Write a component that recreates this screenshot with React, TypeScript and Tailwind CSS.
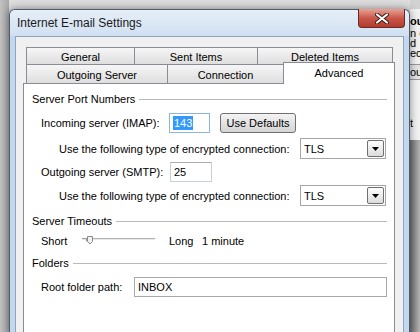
import React from 'react'

const ui = "font-['Liberation_Sans',Arial,sans-serif] text-[11px] leading-[14px] text-black"

function Tab({ label, cls, selected }: { label: string; cls: string; selected?: boolean }) {
  if (selected) {
    return (
      <div className={`relative z-10 -mb-px flex h-[22px] justify-center border border-b-0 border-[#898c95] bg-white pt-[3px] ${cls}`}>
        {label}
      </div>
    )
  }
  return (
    <div className={`flex justify-center border-t border-l border-[#898c95] bg-linear-to-b from-[#f6f6f6] to-[#dedede] ${cls}`}>
      {label}
    </div>
  )
}

function Heading({ label }: { label: string }) {
  return (
    <div className="flex h-[16px] items-center">
      <span>{label}</span>
      <div className="ml-[4px] h-px flex-1 bg-[#b9b9b9]" />
    </div>
  )
}

function Select({ value }: { value: string }) {
  return (
    <div className="flex h-[21px] w-[86px] items-center border border-[#a5a5a5] bg-white">
      <span className="pl-[3px]">{value}</span>
      <div className="mr-px ml-auto flex h-[17px] w-[17px] items-center justify-center rounded-[2px] border border-[#707070] bg-linear-to-b from-[#fdfdfd] to-[#dcdcdc]">
        <svg width="7" height="4" viewBox="0 0 7 4">
          <path d="M0 0h7L3.5 4z" fill="#000" />
        </svg>
      </div>
    </div>
  )
}

function CloseButton() {
  return (
    <div className="-mt-px mr-[4px] flex h-[19px] w-[47px] items-center justify-center rounded-b-[4px] border border-t-0 border-[#6a2a22] bg-linear-to-b from-[#e6a396] via-[#c9574a] to-[#b33b2c]">
      <svg width="14" height="11" viewBox="0 0 14 11">
        <path d="M2 1.5l10 8M12 1.5l-10 8" stroke="#3b1a16" strokeWidth="4" strokeLinecap="round" />
        <path d="M2 1.5l10 8M12 1.5l-10 8" stroke="#fff" strokeWidth="2.2" strokeLinecap="round" />
      </svg>
    </div>
  )
}

function Slider() {
  return (
    <svg width="74" height="16" viewBox="0 0 74 16">
      <rect x="0" y="5" width="73" height="1" fill="#b4b4b4" />
      <rect x="0" y="6" width="73" height="1" fill="#e8e8e8" />
      <path d="M0.5 5.5h4v3" stroke="#9a9a9a" fill="none" />
      <path d="M5.5 3.5h5v5l-2.5 2.5l-2.5-2.5z" fill="#f2f2f2" stroke="#8b8b8b" />
    </svg>
  )
}

export default function App() {
  return (
    <div className={`flex h-[332px] w-[420px] overflow-hidden bg-[#d6d6d6] ${ui}`}>
      {/* desktop left */}
      <div className="w-[9px] bg-linear-to-r from-[#c2c2c2] to-[#a8a8a8]" />

      <div className="flex w-[401px] flex-col">
        <div className="h-[9px] shrink-0 bg-[#dedede]" />
        {/* window */}
        <div className="relative z-10 flex flex-1 flex-col rounded-t-[6px] border border-b-0 border-[#4d5d6e] bg-[#c2d8ef] shadow-[0_0_8px_rgba(0,0,0,0.45)]">
          <div className="flex h-[26px] shrink-0 items-start justify-between rounded-t-[5px] bg-linear-to-b from-[#e7eff8] to-[#d0e0f1]">
            <span className="mt-[6px] ml-[7px] text-[12px] leading-[14px] text-[#1a1a1a]">Internet E-mail Settings</span>
            <CloseButton />
          </div>

          {/* client area */}
          <div className="mx-[5px] flex-1 border border-[#8fa3ba] bg-[#f0f0f0] pt-[10px] pr-[8px] pl-[7px]">
            <div className="ml-[3px] flex h-[17px]">
              <Tab label="General" cls="h-[17px] w-[108px] pt-[2px]" />
              <Tab label="Sent Items" cls="h-[17px] w-[123px] pt-[2px]" />
              <Tab label="Deleted Items" cls="h-[17px] w-[136px] border-r pt-[2px]" />
            </div>
            <div className="ml-[3px] flex h-[19px] items-end">
              <Tab label="Outgoing Server" cls="h-[19px] w-[141px] pt-[3px]" />
              <Tab label="Connection" cls="h-[19px] w-[116px] pt-[3px]" />
              <Tab label="Advanced" cls="w-[112px]" selected />
            </div>

            {/* panel */}
            <div className="flex h-[250px] flex-col border border-[#898c95] bg-white pr-[7px] pl-[8px]">
              <div className="mt-[7px]">
                <Heading label="Server Port Numbers" />
              </div>
              <div className="mt-[6px] flex h-[20px] items-center pl-[9px]">
                <span className="w-[128px]">Incoming server (IMAP):</span>
                <div className="flex h-[20px] w-[41px] items-center border border-[#8cb4dc] bg-white pl-[3px]">
                  <span className="bg-[#3399ff] px-px text-white">143</span>
                </div>
                <div className="ml-[10px] flex h-[20px] w-[76px] items-center justify-center rounded-[3px] border border-[#707070] bg-linear-to-b from-[#f4f4f4] to-[#d4d4d4]">
                  Use Defaults
                </div>
              </div>
              <div className="mt-[5px] flex h-[21px] items-center pl-[27px]">
                <span className="w-[241px]">Use the following type of encrypted connection:</span>
                <Select value="TLS" />
              </div>
              <div className="mt-[3px] flex h-[20px] items-center pl-[9px]">
                <span className="w-[129px]">Outgoing server (SMTP):</span>
                <div className="flex h-[20px] w-[42px] items-center border border-[#c7cfd8] border-t-[#abadb3] bg-white pl-[3px]">
                  25
                </div>
              </div>
              <div className="mt-[3px] flex h-[21px] items-center pl-[27px]">
                <span className="w-[241px]">Use the following type of encrypted connection:</span>
                <Select value="TLS" />
              </div>

              <div className="mt-[7px]">
                <Heading label="Server Timeouts" />
              </div>
              <div className="mt-[4px] flex h-[16px] items-center pl-[9px]">
                <span className="w-[41px]">Short</span>
                <Slider />
                <span className="ml-[13px] w-[33px]">Long</span>
                <span>1 minute</span>
              </div>

              <div className="mt-[6px]">
                <Heading label="Folders" />
              </div>
              <div className="mt-[6px] flex h-[20px] items-center pl-[9px]">
                <span className="w-[93px]">Root folder path:</span>
                <div className="flex h-[20px] flex-1 items-center border border-[#a9a9a9] bg-white pl-[3px]">
                  INBOX
                </div>
              </div>
            </div>
          </div>
        </div>
      </div>

      {/* desktop right, window behind */}
      <div className="flex w-[10px] flex-col overflow-hidden whitespace-nowrap">
        <div className="h-[9px] bg-[#d2d2d2]" />
        <div className="flex h-[131px] flex-col bg-[#f2f2f2] text-[11px] leading-[10px]">
          <div className="mt-[7px] font-bold">ou</div>
          <div className="mt-[2px]">n c</div>
          <div>d ·</div>
          <div>equ</div>
          <div className="mt-[6px] h-px bg-[#9a9a9a]" />
          <div className="bg-[#e4e4e4] py-[2px]">ou</div>
          <div className="h-px bg-[#9a9a9a]" />
          <div className="mt-[38px]">t</div>
        </div>
        <div className="flex-1 bg-linear-to-r from-[#6e6e6e] to-[#b4b4b4]" />
      </div>
    </div>
  )
}
